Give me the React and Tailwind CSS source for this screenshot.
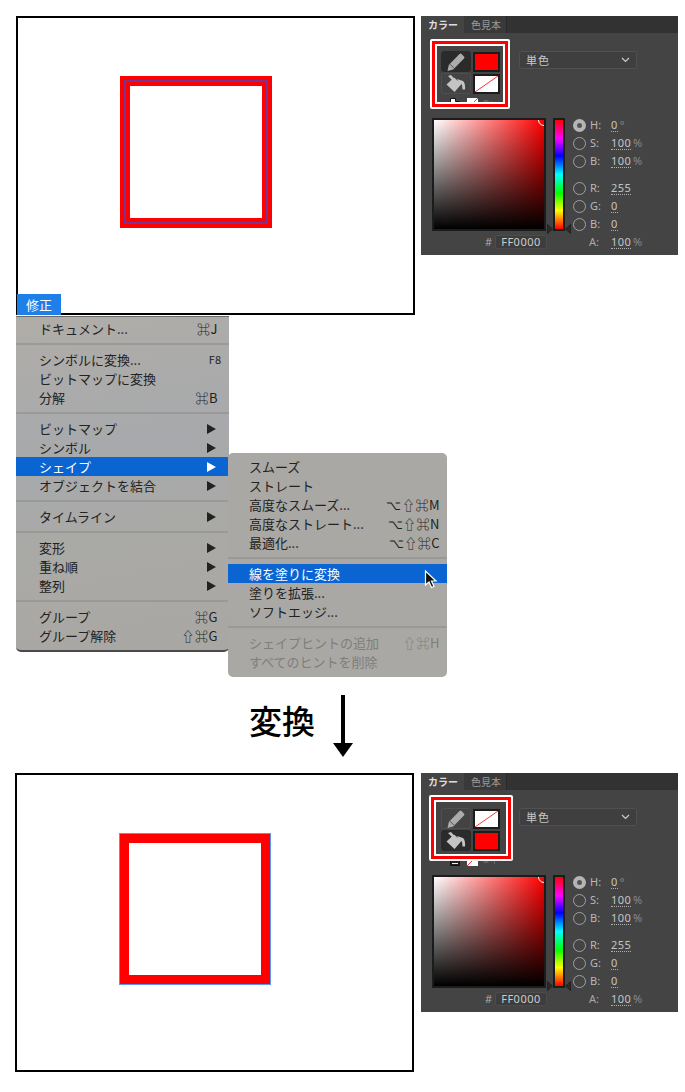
const jp = 'font-["Noto_Sans_CJK_JP",sans-serif]';

function Arrowhead() {
  return (
    <svg width="9" height="10" viewBox="0 0 9 10">
      <path d="M0 0 L9 5 L0 10 Z" fill="currentColor" />
    </svg>
  );
}

function MenuRow({ label, shortcut, arrow, small, selected, disabled, pad }) {
  let color = 'text-[#222]';
  if (selected) color = 'bg-[#0a64d2] text-white';
  if (disabled) color = 'text-[#7f7e7b]';
  return (
    <div className={`flex h-[19px] items-center justify-between text-[13px] leading-[19px] ${pad} ${color}`}>
      <span>{label}</span>
      {shortcut && (
        <span className={small ? '-mr-[3px] text-[11px]' : 'tracking-[0.5px]'}>{shortcut}</span>
      )}
      {arrow && (
        <span className="mr-[2px]">
          <Arrowhead />
        </span>
      )}
    </div>
  );
}

function Separator() {
  return <div className="my-[5px] h-[2px] bg-[#9b9995]" />;
}

function MainMenu() {
  const pad = 'pl-[23px] pr-[11px]';
  return (
    <div className="mt-px h-[336px] w-[213px] rounded-b-[5px] border-t border-b-2 border-t-[#6b6a68] border-b-[#4a4a4a] bg-[linear-gradient(170deg,#b0ada8_0%,#a7a9ac_40%,#aaa9a5_70%,#a9a7a3_100%)] pt-[2px]">
      <MenuRow pad={pad} label="ドキュメント..." shortcut="⌘J" />
      <Separator />
      <MenuRow pad={pad} label="シンボルに変換..." shortcut="F8" small />
      <MenuRow pad={pad} label="ビットマップに変換" />
      <MenuRow pad={pad} label="分解" shortcut="⌘B" />
      <Separator />
      <MenuRow pad={pad} label="ビットマップ" arrow />
      <MenuRow pad={pad} label="シンボル" arrow />
      <MenuRow pad={pad} label="シェイプ" arrow selected />
      <MenuRow pad={pad} label="オブジェクトを結合" arrow />
      <Separator />
      <MenuRow pad={pad} label="タイムライン" arrow />
      <Separator />
      <MenuRow pad={pad} label="変形" arrow />
      <MenuRow pad={pad} label="重ね順" arrow />
      <MenuRow pad={pad} label="整列" arrow />
      <Separator />
      <MenuRow pad={pad} label="グループ" shortcut="⌘G" />
      <MenuRow pad={pad} label="グループ解除" shortcut="⇧⌘G" />
    </div>
  );
}

function SubMenu() {
  const pad = 'pl-[21px] pr-[7px]';
  return (
    <div className="relative mt-[159px] -ml-px h-[224px] w-[219px] rounded-[5px] bg-[#a9a8a5] pt-[4px]">
      <MenuRow pad={pad} label="スムーズ" />
      <MenuRow pad={pad} label="ストレート" />
      <MenuRow pad={pad} label="高度なスムーズ..." shortcut="⌥⇧⌘M" />
      <MenuRow pad={pad} label="高度なストレート..." shortcut="⌥⇧⌘N" />
      <MenuRow pad={pad} label="最適化..." shortcut="⌥⇧⌘C" />
      <Separator />
      <MenuRow pad={pad} label="線を塗りに変換" selected />
      <MenuRow pad={pad} label="塗りを拡張..." />
      <MenuRow pad={pad} label="ソフトエッジ..." />
      <Separator />
      <MenuRow pad={pad} label="シェイプヒントの追加" shortcut="⇧⌘H" disabled />
      <MenuRow pad={pad} label="すべてのヒントを削除" disabled />
      <svg className="absolute left-[196px] top-[117px]" width="14" height="19" viewBox="0 0 14 19">
        <path d="M1.5 1 L1.5 15 L5 12 L7.5 17.5 L10 16.5 L7.5 11 L12 11 Z" fill="#111" stroke="#fff" strokeWidth="1.2" />
      </svg>
    </div>
  );
}

function PencilIcon() {
  return (
    <svg width="20" height="20" viewBox="0 0 20 20">
      <path d="M1.5 19 L2.8 13 L13.5 2 Q14.5 1 15.5 2 L18 4.5 Q19 5.5 18 6.5 L7.2 17.5 Z" fill="#ababab" />
      <path d="M4 12.2 L8 16.2" stroke="#3a3a3a" strokeWidth="0.8" />
    </svg>
  );
}

function BucketIcon() {
  return (
    <svg width="20" height="18" viewBox="0 0 20 18">
      <path d="M0.5 9.5 L8 2.5 L15.5 9 L8.5 17 Z" fill="#c4c4c4" />
      <path d="M2 1 L5 0 L8.5 4 L6.5 5.5 Z" fill="#c4c4c4" />
      <path d="M11 4 L17 6 Q19.5 8 19 14.5 L16.5 14.5 L16 9.5 L13 8 Z" fill="#c4c4c4" />
    </svg>
  );
}

function NoneSwatch() {
  return (
    <div className="h-[20px] w-[27px] border-2 border-[#1c1c1c] bg-white">
      <svg className="h-full w-full" viewBox="0 0 23 16" preserveAspectRatio="none">
        <line x1="0" y1="16" x2="23" y2="0" stroke="#f33" strokeWidth="1" />
      </svg>
    </div>
  );
}

function RedSwatch() {
  return <div className="h-[20px] w-[27px] border-2 border-[#1c1c1c] bg-[#ff0000]" />;
}

function ToolButton({ active, children }) {
  return (
    <div className={`flex h-[21px] w-[30px] items-center justify-center rounded-[3px] border ${active ? 'border-[#2a2a2a] bg-[#2b2b2b]' : 'border-[#4f4f4f] bg-[#434343]'}`}>
      {children}
    </div>
  );
}

// default colours, no colour and swap buttons under the tools
function SmallIcons({ dark }) {
  return (
    <svg className="mt-[4px] ml-[8px]" width="48" height="11" viewBox="0 0 48 11">
      <path d="M1.5 0.5 H6.5 V3.5 H10.5 V10.5 H1.5 Z" fill={dark ? '#222' : '#fff'} stroke="#111" />
      <path d="M3 8.5 H9" stroke={dark ? '#eee' : '#fff'} />
      <rect x="18" y="0" width="11" height="11" fill="#fff" />
      <line x1="18" y1="11" x2="29" y2="0" stroke="#f33" />
      <rect x="34.5" y="2" width="5" height="6" fill="#606060" />
      <path d="M41 5 h4.5 v4 M41 5 l2 -2 M41 5 l2 2" stroke="#6a6a6a" fill="none" />
    </svg>
  );
}

function Param({ letter, value, unit, checked }) {
  return (
    <div className="flex h-[18px] items-center text-[11px] text-[#b8b8b8]">
      <span className={`mr-[4px] flex h-[13px] w-[13px] items-center justify-center rounded-full ${checked ? 'bg-[#b5b5b5]' : 'border border-[#a0a0a0]'}`}>
        {checked && <span className="h-[5px] w-[5px] rounded-full bg-[#555]" />}
      </span>
      <span className="w-[21px]">{letter}:</span>
      <span className="border-b border-dotted border-[#b0b0b0] leading-[12px] tracking-[0.4px] text-[#c4c4c4]">{value}</span>
      {unit && <span className="ml-[2px] text-[#8a8a8a]">{unit}</span>}
    </div>
  );
}

function ColorPanel({ strokeActive, box }) {
  return (
    <div className={`relative h-[239px] w-[257px] bg-[#444] ${jp}`}>
      <div className="flex h-[17px] bg-[#323232] text-[10px] leading-[17px]">
        <div className="w-[43px] bg-[#444] pl-[7px] font-bold text-[#ddd]">カラー</div>
        <div className="w-[43px] border-r border-[#2a2a2a] bg-[#393939] pl-[7px] text-[#999]">色見本</div>
      </div>
      <div className="mt-[18px] flex items-start pl-[20px]">
        <div>
          <div className="grid grid-cols-[30px_27px] gap-x-[2px] gap-y-[1px]">
            <ToolButton active={strokeActive}><PencilIcon /></ToolButton>
            <div className="pt-px">{strokeActive ? <RedSwatch /> : <NoneSwatch />}</div>
            <ToolButton active={!strokeActive}><BucketIcon /></ToolButton>
            <div className="pt-px">{strokeActive ? <NoneSwatch /> : <RedSwatch />}</div>
          </div>
          <SmallIcons dark={!strokeActive} />
        </div>
        <div className="ml-[19px] flex h-[18px] w-[118px] items-center justify-between rounded-[3px] border border-[#505050] bg-[#3f3f3f] px-[6px] text-[11px] text-[#c8c8c8]">
          <span className="tracking-[1px]">単色</span>
          <svg width="9" height="6" viewBox="0 0 9 6"><path d="M1 1 L4.5 4.5 L8 1" fill="none" stroke="#ccc" strokeWidth="1.2" /></svg>
        </div>
      </div>
      <div className="mt-[9px] flex items-start pl-[11px]">
        <div className="relative h-[113px] w-[114px] overflow-hidden border-2 border-[#1c1c1c] bg-[linear-gradient(to_top,#000,transparent),linear-gradient(to_right,#fff,#f00)]">
          <div className="absolute -right-[6px] -top-[6px] h-[12px] w-[12px] rounded-full border border-white" />
        </div>
        <div className="relative ml-[7px] h-[113px] w-[12px] border-2 border-[#1c1c1c] bg-[linear-gradient(to_bottom,#f00,#f0f_17%,#00f_33%,#0ff_50%,#0f0_67%,#ff0_83%,#f00)]">
          <svg className="absolute -left-[8px] bottom-[-5px]" width="6" height="10" viewBox="0 0 6 10"><path d="M0.5 0.5 L5.5 5 L0.5 9.5 Z" fill="#2a2a2a" stroke="#222" /></svg>
          <svg className="absolute -right-[8px] bottom-[-5px]" width="6" height="10" viewBox="0 0 6 10"><path d="M5.5 0.5 L0.5 5 L5.5 9.5 Z" fill="#2a2a2a" stroke="#222" /></svg>
        </div>
        <div className="-mt-[2px] ml-[8px] font-['Noto_Sans',sans-serif]">
          <Param letter="H" value="0" unit="°" checked />
          <Param letter="S" value="100" unit="%" />
          <Param letter="B" value="100" unit="%" />
          <div className="h-[9px]" />
          <Param letter="R" value="255" />
          <Param letter="G" value="0" />
          <Param letter="B" value="0" />
        </div>
      </div>
      <div className="mt-[2px] flex h-[14px] items-center pl-[64px] font-['Noto_Sans',sans-serif] text-[11px] text-[#a8a8a8]">
        <span className="w-[10px]">#</span>
        <span className="h-[14px] w-[52px] rounded-[2px] border border-[#4c4c4c] bg-[#3d3d3d] text-center leading-[12px] tracking-[0.5px] text-[#ccc]">FF0000</span>
        <span className="ml-[42px] w-[22px]">A:</span>
        <span className="border-b border-dotted border-[#b0b0b0] leading-[12px] tracking-[0.4px] text-[#c4c4c4]">100</span>
        <span className="ml-[2px] text-[#8a8a8a]">%</span>
      </div>
      <div className={`absolute rounded-[2px] border-2 border-white ${box}`}>
        <div className="h-full w-full border-[3px] border-[#ff0000]">
          <div className="h-full w-full border-2 border-white" />
        </div>
      </div>
    </div>
  );
}

function Canvas({ children }) {
  return (
    <div className="h-[299px] w-[399px] border-2 border-black bg-white pl-[102px] pt-[58px]">
      {children}
    </div>
  );
}

function OutlinedSquare() {
  return (
    <div className="h-[152px] w-[152px] bg-[#ff0000] p-[4px]">
      <div className="h-full w-full rounded-[1px] border-2 border-[#7b3393] p-[4px]">
        <div className="h-full w-full bg-white" />
      </div>
    </div>
  );
}

function FilledSquare() {
  return (
    <div className="h-[152px] w-[152px] border border-[#5c95f5] bg-[#ff0000] p-[9px]">
      <div className="h-full w-full bg-white" />
    </div>
  );
}

export default function App() {
  return (
    <div className={`h-[1092px] w-[685px] overflow-hidden bg-white pt-4 ${jp}`}>
      <div className="flex items-start gap-[6px] pl-4">
        <Canvas><OutlinedSquare /></Canvas>
        <ColorPanel strokeActive box="left-[9px] top-[23px] h-[70px] w-[80px]" />
      </div>

      <div className="relative -mt-[21px] flex items-start pl-4">
        <div>
          <div className="ml-px h-[21px] w-[44px] bg-[#1f7fe8] text-center text-[13px] leading-[21px] text-white">修正</div>
          <MainMenu />
        </div>
        <SubMenu />
      </div>

      <div className="mt-[18px] flex h-[62px] items-start pl-[249px]">
        <span className="text-[33px] font-medium leading-[50px] text-black">変換</span>
        <svg className="ml-[18px]" width="20" height="62" viewBox="0 0 20 62">
          <rect x="8" y="0" width="4" height="49" fill="#000" />
          <path d="M0 48 L20 48 L10 62 Z" fill="#000" />
        </svg>
      </div>

      <div className="mt-[16px] flex items-start gap-[7px] pl-[15px]">
        <Canvas><FilledSquare /></Canvas>
        <ColorPanel box="left-[8px] top-[22px] h-[66px] w-[84px]" />
      </div>
    </div>
  );
}
